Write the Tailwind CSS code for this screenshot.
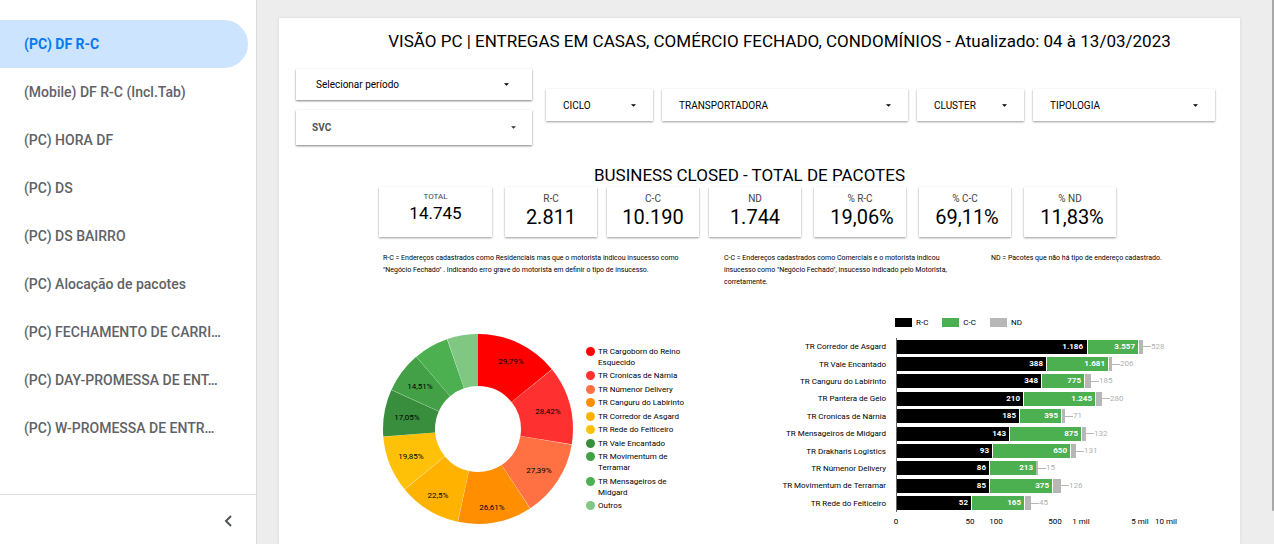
<!DOCTYPE html>
<html lang="pt-BR">
<head>
<meta charset="utf-8">
<meta name="viewport" content="width=device-width, initial-scale=1">
<title>Visão PC</title>
<script src="https://cdn.jsdelivr.net/npm/@tailwindcss/browser@4"></script>
</head>
<body class="flex h-screen overflow-hidden bg-[#ededed] font-[Roboto,sans-serif] text-black">

<aside class="flex w-[257px] shrink-0 flex-col border-r border-[#dadce0] bg-white">
  <nav class="flex flex-1 flex-col pt-5 pr-2 text-sm font-medium text-[#5f6368]">
    <a href="#" aria-current="page" class="flex h-12 items-center rounded-r-full bg-[#cce4fd] pr-5 pb-px pl-6 font-bold text-[#0a78f0]">(PC) DF R-C</a>
    <a href="#" class="flex h-12 items-center pr-5 pb-px pl-6">(Mobile) DF R-C (Incl.Tab)</a>
    <a href="#" class="flex h-12 items-center pr-5 pb-px pl-6">(PC) HORA DF</a>
    <a href="#" class="flex h-12 items-center pr-5 pb-px pl-6">(PC) DS</a>
    <a href="#" class="flex h-12 items-center pr-5 pb-px pl-6">(PC) DS BAIRRO</a>
    <a href="#" class="flex h-12 items-center pr-5 pb-px pl-6">(PC) Alocação de pacotes</a>
    <a href="#" class="flex h-12 items-center pb-px pl-6 whitespace-nowrap">(PC) FECHAMENTO DE CARRI…</a>
    <a href="#" class="flex h-12 items-center pb-px pl-6 whitespace-nowrap">(PC) DAY-PROMESSA DE ENT…</a>
    <a href="#" class="flex h-12 items-center pb-px pl-6 whitespace-nowrap">(PC) W-PROMESSA DE ENTR…</a>
  </nav>
  <div class="flex h-[50px] items-center justify-end border-t border-[#dadce0] pt-[3px] pr-[22px]">
    <button type="button" aria-label="Recolher menu">
      <svg class="block" width="10" height="14" viewBox="0 0 10 14" fill="none" stroke="#4f5458" stroke-width="2"><path d="M7 2 2 7l5 5"/></svg>
    </button>
  </div>
</aside>

<div class="min-w-0 flex-1 pt-[18px] pr-8 pl-[22px]">
<main class="h-full bg-white pt-[11px] pr-[25px] pl-[17px] shadow-[0_0_3px_rgba(0,0,0,0.1)]">
  <h1 class="pl-12 text-center text-[17px] leading-6">VISÃO PC | ENTREGAS EM CASAS, COMÉRCIO FECHADO, CONDOMÍNIOS - Atualizado: 04 à 13/03/2023</h1>

  <section aria-label="Filtros" class="mt-4 flex items-center">
    <div class="mr-[14px] flex w-[236px] flex-col gap-[10px]">
      <button type="button" aria-haspopup="true" class="flex h-[31px] items-center justify-between bg-white pr-[23px] pl-5 text-[10px] shadow-[0_1px_2px_rgba(0,0,0,0.5)]"><span>Selecionar período</span><svg width="5" height="3" viewBox="0 0 6 3"><path d="M0 0h6L3 3z"/></svg></button>
      <button type="button" aria-haspopup="true" class="flex h-[35px] items-center justify-between bg-white pr-4 pl-4 text-[10px] font-bold text-[#555] shadow-[0_1px_2px_rgba(0,0,0,0.5)]"><span>SVC</span><svg width="5" height="3" viewBox="0 0 6 3"><path d="M0 0h6L3 3z" fill="#333"/></svg></button>
    </div>
    <div class="flex flex-1 gap-[9px] pb-1">
      <button type="button" aria-haspopup="true" class="flex h-8 w-[107px] items-center justify-between bg-white px-[17px] text-[10px] shadow-[0_1px_2px_rgba(0,0,0,0.4)]"><span>CICLO</span><svg width="5" height="3" viewBox="0 0 6 3"><path d="M0 0h6L3 3z"/></svg></button>
      <button type="button" aria-haspopup="true" class="flex h-8 flex-1 items-center justify-between bg-white px-[17px] text-[10px] shadow-[0_1px_2px_rgba(0,0,0,0.4)]"><span>TRANSPORTADORA</span><svg width="5" height="3" viewBox="0 0 6 3"><path d="M0 0h6L3 3z"/></svg></button>
      <button type="button" aria-haspopup="true" class="flex h-8 w-[107px] items-center justify-between bg-white px-[17px] text-[10px] shadow-[0_1px_2px_rgba(0,0,0,0.4)]"><span>CLUSTER</span><svg width="5" height="3" viewBox="0 0 6 3"><path d="M0 0h6L3 3z"/></svg></button>
      <button type="button" aria-haspopup="true" class="flex h-8 w-[182px] items-center justify-between bg-white px-[17px] text-[10px] shadow-[0_1px_2px_rgba(0,0,0,0.4)]"><span>TIPOLOGIA</span><svg width="5" height="3" viewBox="0 0 6 3"><path d="M0 0h6L3 3z"/></svg></button>
    </div>
  </section>

  <h2 class="mt-[18px] pr-3 text-center text-[17px] leading-6">BUSINESS CLOSED - TOTAL DE PACOTES</h2>

  <section aria-label="Indicadores" class="flex justify-center gap-[13px] pr-4 text-center">
    <div class="h-[50px] w-[113px] pt-1 shadow-[0_1px_2px_rgba(0,0,0,0.4)]"><p class="text-[8px] leading-3 text-[#444]">TOTAL</p><p class="text-[17px] leading-5">14.745</p></div>
    <div class="flex gap-[10px]">
      <div class="h-[50px] w-[92px] pt-[6px] shadow-[0_1px_2px_rgba(0,0,0,0.4)]"><p class="text-[10px] leading-3 text-[#444]">R-C</p><p class="text-xl leading-6">2.811</p></div>
      <div class="h-[50px] w-[92px] pt-[6px] shadow-[0_1px_2px_rgba(0,0,0,0.4)]"><p class="text-[10px] leading-3 text-[#444]">C-C</p><p class="text-xl leading-6">10.190</p></div>
      <div class="h-[50px] w-[92px] pt-[6px] shadow-[0_1px_2px_rgba(0,0,0,0.4)]"><p class="text-[10px] leading-3 text-[#444]">ND</p><p class="text-xl leading-6">1.744</p></div>
    </div>
    <div class="flex gap-[13px]">
      <div class="h-[50px] w-[92px] pt-[6px] shadow-[0_1px_2px_rgba(0,0,0,0.4)]"><p class="text-[10px] leading-3 text-[#444]">% R-C</p><p class="pl-1 text-xl leading-6">19,06%</p></div>
      <div class="h-[50px] w-[92px] pt-[6px] shadow-[0_1px_2px_rgba(0,0,0,0.4)]"><p class="text-[10px] leading-3 text-[#444]">% C-C</p><p class="pl-1 text-xl leading-6">69,11%</p></div>
      <div class="h-[50px] w-[92px] pt-[6px] shadow-[0_1px_2px_rgba(0,0,0,0.4)]"><p class="text-[10px] leading-3 text-[#444]">% ND</p><p class="pl-1 text-xl leading-6">11,83%</p></div>
    </div>
  </section>

  <section aria-label="Notas" class="mt-[15px] flex pl-[87px] text-[7px] leading-3">
    <p class="w-[341px] pr-8">R-C = Endereços cadastrados como Residenciais mas que o motorista indicou insucesso como<br>"Negócio Fechado" . Indicando erro grave do motorista em definir o tipo de insucesso.</p>
    <p class="w-[267px] pr-8">C-C = Endereços cadastrados como Comerciais e o motorista indicou<br>insucesso como "Negócio Fechado", insucesso indicado pelo Motorista,<br>corretamente.</p>
    <p class="flex-1">ND = Pacotes que não há tipo de endereço cadastrado.</p>
  </section>

  <section aria-label="Gráficos" class="mt-[29px] flex items-start pl-[87px]">
    <svg class="mt-[17px] block shrink-0" width="190" height="190" viewBox="-95 -95 190 190" role="img" aria-label="Distribuição por transportadora">
      <g fill="none" stroke-width="52" transform="rotate(-90)">
        <circle r="69" pathLength="360" stroke="#ff0000" stroke-dasharray="51 360"/>
        <circle r="69" pathLength="360" stroke="#ff3030" stroke-dasharray="48 360" stroke-dashoffset="-51.3"/>
        <circle r="69" pathLength="360" stroke="#ff7043" stroke-dasharray="47.1 360" stroke-dashoffset="-99.5"/>
        <circle r="69" pathLength="360" stroke="#ff8f00" stroke-dasharray="45.4 360" stroke-dashoffset="-146.8"/>
        <circle r="69" pathLength="360" stroke="#ffb300" stroke-dasharray="38 360" stroke-dashoffset="-192.4"/>
        <circle r="69" pathLength="360" stroke="#ffc107" stroke-dasharray="34.6 360" stroke-dashoffset="-230.6"/>
        <circle r="69" pathLength="360" stroke="#388e3c" stroke-dasharray="28.8 360" stroke-dashoffset="-265.4"/>
        <circle r="69" pathLength="360" stroke="#43a047" stroke-dasharray="25 360" stroke-dashoffset="-294.4"/>
        <circle r="69" pathLength="360" stroke="#4caf50" stroke-dasharray="21.3 360" stroke-dashoffset="-319.6"/>
        <circle r="69" pathLength="360" stroke="#81c784" stroke-dasharray="18.9 360" stroke-dashoffset="-341.1"/>
      </g>
      <g class="text-[8px]" text-anchor="middle" fill="#000">
        <text x="33" y="-65">29,79%</text>
        <text x="70" y="-15">28,42%</text>
        <text x="61" y="44">27,39%</text>
        <text x="14" y="81">26,61%</text>
        <text x="-40" y="69">22,5%</text>
        <text x="-67" y="30">19,85%</text>
        <text x="-71" y="-9">17,05%</text>
        <text x="-58" y="-40">14,51%</text>
      </g>
    </svg>

    <ul class="mt-[29px] ml-[13px] flex h-[165px] w-[110px] shrink-0 flex-col justify-between text-[8px] leading-[11px]">
      <li class="flex gap-[3px]"><span class="mt-px size-[9px] shrink-0 rounded-full bg-[#ff0000]"></span><span>TR Cargoborn do Reino<br>Esquecido</span></li>
      <li class="flex gap-[3px]"><span class="mt-px size-[9px] shrink-0 rounded-full bg-[#ff3030]"></span><span>TR Cronicas de Nárnia</span></li>
      <li class="flex gap-[3px]"><span class="mt-px size-[9px] shrink-0 rounded-full bg-[#ff7043]"></span><span>TR Númenor Delivery</span></li>
      <li class="flex gap-[3px]"><span class="mt-px size-[9px] shrink-0 rounded-full bg-[#ff8f00]"></span><span>TR Canguru do Labirinto</span></li>
      <li class="flex gap-[3px]"><span class="mt-px size-[9px] shrink-0 rounded-full bg-[#ffb300]"></span><span>TR Corredor de Asgard</span></li>
      <li class="flex gap-[3px]"><span class="mt-px size-[9px] shrink-0 rounded-full bg-[#ffc107]"></span><span>TR Rede do Feiticeiro</span></li>
      <li class="flex gap-[3px]"><span class="mt-px size-[9px] shrink-0 rounded-full bg-[#388e3c]"></span><span>TR Vale Encantado</span></li>
      <li class="flex gap-[3px]"><span class="mt-px size-[9px] shrink-0 rounded-full bg-[#43a047]"></span><span>TR Movimentum de<br>Terramar</span></li>
      <li class="flex gap-[3px]"><span class="mt-px size-[9px] shrink-0 rounded-full bg-[#4caf50]"></span><span>TR Mensageiros de<br>Midgard</span></li>
      <li class="flex gap-[3px]"><span class="mt-px size-[9px] shrink-0 rounded-full bg-[#81c784]"></span><span>Outros</span></li>
    </ul>

    <div class="ml-[70px] flex-1 text-[8px] leading-[11px]">
      <div class="flex gap-[14px] pl-[129px]">
        <span class="flex items-center gap-1"><span class="h-[9px] w-[17px] bg-black"></span>R-C</span>
        <span class="flex items-center gap-1"><span class="h-[9px] w-[17px] bg-[#4caf50]"></span>C-C</span>
        <span class="flex items-center gap-1"><span class="h-[9px] w-[17px] bg-[#b7b7b7]"></span>ND</span>
      </div>
      <div class="mt-[10px] flex">
        <div class="grid h-[174px] w-[130px] grid-rows-10 items-center pr-[10px] text-right">
          <span>TR Corredor de Asgard</span>
          <span>TR Vale Encantado</span>
          <span>TR Canguru do Labirinto</span>
          <span>TR Pantera de Gelo</span>
          <span>TR Cronicas de Nárnia</span>
          <span>TR Mensageiros de Midgard</span>
          <span>TR Drakharis Logistics</span>
          <span>TR Númenor Delivery</span>
          <span>TR Movimentum de Terramar</span>
          <span>TR Rede do Feiticeiro</span>
        </div>
        <div class="grid h-[174px] flex-1 grid-rows-10 items-center border-l border-[#666] text-right font-bold text-white">
          <div class="flex h-[14px] items-center leading-[14px]"><span class="bg-black pr-1" style="width:190px">1.186</span><span class="ml-px bg-[#4caf50] pr-[3px]" style="width:50px">3.557</span><span class="ml-px h-full bg-[#b7b7b7]" style="width:4px"></span><span class="h-px w-2 bg-[#b7b7b7]"></span><span class="font-normal text-[#b0b0b0]">528</span></div>
          <div class="flex h-[14px] items-center leading-[14px]"><span class="bg-black pr-[3px]" style="width:149px">388</span><span class="ml-px bg-[#4caf50] pr-[3px]" style="width:61px">1.681</span><span class="ml-px h-full bg-[#b7b7b7]" style="width:3px"></span><span class="h-px w-2 bg-[#b7b7b7]"></span><span class="font-normal text-[#b0b0b0]">206</span></div>
          <div class="flex h-[14px] items-center leading-[14px]"><span class="bg-black pr-[3px]" style="width:144px">348</span><span class="ml-px bg-[#4caf50] pr-[3px]" style="width:42px">775</span><span class="ml-px h-full bg-[#b7b7b7]" style="width:6px"></span><span class="h-px w-2 bg-[#b7b7b7]"></span><span class="font-normal text-[#b0b0b0]">185</span></div>
          <div class="flex h-[14px] items-center leading-[14px]"><span class="bg-black pr-[3px]" style="width:126px">210</span><span class="ml-px bg-[#4caf50] pr-[3px]" style="width:71px">1.245</span><span class="ml-px h-full bg-[#b7b7b7]" style="width:6px"></span><span class="h-px w-2 bg-[#b7b7b7]"></span><span class="font-normal text-[#b0b0b0]">280</span></div>
          <div class="flex h-[14px] items-center leading-[14px]"><span class="bg-black pr-[3px]" style="width:122px">185</span><span class="ml-px bg-[#4caf50] pr-[3px]" style="width:41px">395</span><span class="ml-px h-full bg-[#b7b7b7]" style="width:3px"></span><span class="h-px w-2 bg-[#b7b7b7]"></span><span class="font-normal text-[#b0b0b0]">71</span></div>
          <div class="flex h-[14px] items-center leading-[14px]"><span class="bg-black pr-[3px]" style="width:112px">143</span><span class="ml-px bg-[#4caf50] pr-[3px]" style="width:71px">875</span><span class="ml-px h-full bg-[#b7b7b7]" style="width:4px"></span><span class="h-px w-2 bg-[#b7b7b7]"></span><span class="font-normal text-[#b0b0b0]">132</span></div>
          <div class="flex h-[14px] items-center leading-[14px]"><span class="bg-black pr-[3px]" style="width:95px">93</span><span class="ml-px bg-[#4caf50] pr-[3px]" style="width:77px">650</span><span class="ml-px h-full bg-[#b7b7b7]" style="width:5px"></span><span class="h-px w-2 bg-[#b7b7b7]"></span><span class="font-normal text-[#b0b0b0]">131</span></div>
          <div class="flex h-[14px] items-center leading-[14px]"><span class="bg-black pr-[3px]" style="width:92px">86</span><span class="ml-px bg-[#4caf50] pr-[3px]" style="width:46px">213</span><span class="h-full bg-[#b7b7b7]" style="width:2px"></span><span class="h-px w-2 bg-[#b7b7b7]"></span><span class="font-normal text-[#b0b0b0]">15</span></div>
          <div class="flex h-[14px] items-center leading-[14px]"><span class="bg-black pr-[3px]" style="width:92px">85</span><span class="ml-px bg-[#4caf50] pr-[3px]" style="width:62px">375</span><span class="ml-px h-full bg-[#b7b7b7]" style="width:8px"></span><span class="h-px w-2 bg-[#b7b7b7]"></span><span class="font-normal text-[#b0b0b0]">126</span></div>
          <div class="flex h-[14px] items-center leading-[14px]"><span class="bg-black pr-[3px]" style="width:74px">52</span><span class="ml-px bg-[#4caf50] pr-[3px]" style="width:52px">165</span><span class="ml-px h-full bg-[#b7b7b7]" style="width:6px"></span><span class="h-px w-2 bg-[#b7b7b7]"></span><span class="font-normal text-[#b0b0b0]">45</span></div>
        </div>
      </div>
      <svg class="mt-1 ml-[120px] block" width="310" height="12" viewBox="0 0 310 12" text-anchor="middle" aria-label="Escala">
        <text x="10" y="8">0</text><text x="84" y="8">50</text><text x="110" y="8">100</text><text x="169" y="8">500</text><text x="195" y="8">1 mil</text><text x="254" y="8">5 mil</text><text x="280" y="8">10 mil</text>
      </svg>
    </div>
  </section>
</main>
</div>

<div class="h-screen w-[2px] shrink-0"><div class="h-[94%] w-full rounded-b-full bg-[#a8a8a8]"></div></div>
</body>
</html>
